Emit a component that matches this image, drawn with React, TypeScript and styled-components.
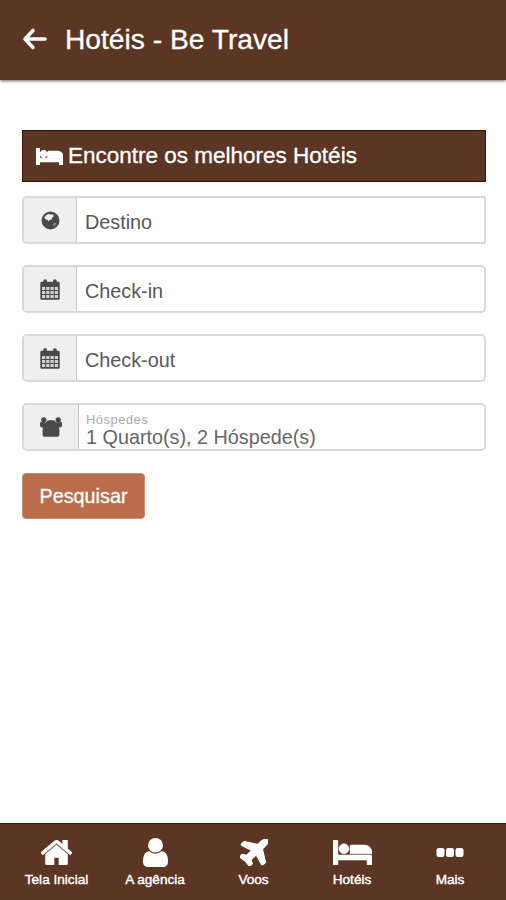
import React from 'react';
import styled, { createGlobalStyle } from 'styled-components';

const BROWN = '#5c3625';

const GlobalStyle = createGlobalStyle`
  * { box-sizing: border-box; }
  body { margin: 0; background: #fefefe; font-family: "Liberation Sans", Arial, sans-serif; }
`;

const Screen = styled.div`
  display: flex;
  flex-direction: column;
  height: 900px;
  overflow: hidden;
`;

const Header = styled.header`
  display: flex;
  align-items: center;
  gap: 17px;
  height: 80px;
  padding: 0 22px;
  background: ${BROWN};
  color: #fff;
  box-shadow: 0 1px 3px rgba(0, 0, 0, 0.6);
`;

const BackButton = styled.button`
  display: flex;
  padding: 0 0 3px;
  border: 0;
  background: none;
  color: inherit;
`;

const Title = styled.h1`
  margin: 0;
  font-size: 28.2px;
  font-weight: 400;
  line-height: 78px;
  padding-bottom: 2px;
  -webkit-text-stroke: 0.3px #fff;
`;

const Content = styled.main`
  flex: 1;
  padding: 50px 20px 0 22px;
`;

const Banner = styled.h2`
  display: flex;
  align-items: center;
  gap: 5px;
  height: 52px;
  margin: 0 0 14px;
  padding: 0 13px;
  border: 1px solid #421006;
  background: ${BROWN};
  color: #fff;
  font-size: 22.5px;
  font-weight: 400;
  white-space: nowrap;
  -webkit-text-stroke: 0.3px #fff;
`;

const Field = styled.label<{ $square?: boolean }>`
  display: flex;
  height: 48px;
  margin-bottom: 21px;
  border: 2px solid #d9d9d9;
  border-radius: ${({ $square }) => ($square ? '5px 0 0 5px' : '5px')};
  background: #fff;
  overflow: hidden;
`;

const Addon = styled.span<{ $wide?: boolean }>`
  display: flex;
  align-items: center;
  justify-content: center;
  width: ${({ $wide }) => ($wide ? 55 : 53)}px;
  border-right: 1px solid #c6c6c6;
  background: #efefef;
  color: #4a4a4a;
`;

const Value = styled.span`
  padding: 2px 0 0 8px;
  color: #585858;
  font-size: 19.8px;
  line-height: 44px;
  white-space: nowrap;
`;

const GuestValue = styled.span`
  display: flex;
  flex-direction: column;
  padding: 7px 0 0 7px;
  color: #666;
  white-space: nowrap;
`;

const Caption = styled.small`
  height: 14px;
  color: #aaa;
  font-size: 13px;
  letter-spacing: 0.45px;
  line-height: 15px;
`;

const Guests = styled.span`
  font-size: 19.8px;
  line-height: 22px;
`;

const SearchButton = styled.button`
  display: block;
  width: 123px;
  height: 46px;
  margin-top: 22px;
  padding: 0;
  border: 1px solid #c98b72;
  border-radius: 4px;
  background: #bb6c4a;
  color: #fff;
  font: 19.8px "Liberation Sans", Arial, sans-serif;
  -webkit-text-stroke: 0.3px #fff;
`;

const NavBar = styled.nav`
  display: grid;
  grid-template-columns: 113px 84px 113px 84px 112px;
  height: 77px;
  border-top: 1px solid #421006;
  background: ${BROWN};
  color: #fff;
`;

const NavItem = styled.a`
  display: flex;
  flex-direction: column;
  align-items: center;
  padding-top: 11px;
  font-size: 13.6px;
  line-height: 20px;
  white-space: nowrap;
  -webkit-text-stroke: 0.4px #fff;
`;

const NavIcon = styled.span`
  display: flex;
  align-items: center;
  justify-content: center;
  height: 35px;
`;

const Icon = styled.svg`
  display: block;
  flex: none;
  fill: currentColor;
`;

const HOME =
  'M1472 992v480q0 26-19 45t-45 19h-384v-384h-256v384h-384q-26 0-45-19t-19-45v-480q0-1 .5-3t.5-3l575-474 575 474q1 2 1 6zm223-69l-62 74q-8 9-21 11h-3q-13 0-21-7l-692-577-692 577q-12 8-24 7-13-2-21-11l-62-74q-8-10-7-23.5t11-21.5l719-599q32-26 76-26t76 26l244 204v-195q0-14 9-23t23-9h192q14 0 23 9t9 23v408l219 182q10 8 11 21.5t-7 23.5z';
const USER =
  'M1536 1399q0 109-62.5 187t-150.5 78h-854q-88 0-150.5-78t-62.5-187q0-85 8.5-160.5t31.5-152 58.5-131 94-89 134.5-34.5q131 128 313 128t313-128q76 0 134.5 34.5t94 89 58.5 131 31.5 152 8.5 160.5zm-256-887q0 159-112.5 271.5t-271.5 112.5-271.5-112.5-112.5-271.5 112.5-271.5 271.5-112.5 271.5 112.5 112.5 271.5z';
const PLANE =
  'M1568 160q44 52 12 148t-108 172l-161 161 160 696q5 19-12 33l-128 96q-7 6-19 6-4 0-7-1-15-3-21-16l-279-508-259 259 53 194q5 17-8 31l-96 96q-9 9-23 9h-2q-15-2-24-13l-189-252-252-189q-11-7-13-23-1-13 9-25l96-97q9-9 23-9 6 0 8 1l194 53 259-259-508-279q-14-8-17-24-2-16 9-27l128-128q14-13 30-8l665 159 160-160q76-76 172-108t148 12z';
const BED =
  'M256 1024h1728q26 0 45 19t19 45v448h-256v-256h-1536v256h-256v-1216q0-26 19-45t45-19h128q26 0 45 19t19 45v704zm576-320q0-106-75-181t-181-75-181 75-75 181 75 181 181 75 181-75 75-181zm1216 256v-64q0-159-112.5-271.5t-271.5-112.5h-704q-26 0-45 19t-19 45v384h1152z';

const BedIcon = ({ width, height, weight }: { width: number; height: number; weight: number }) => (
  <Icon width={width} height={height} viewBox="0 256 2048 1280" preserveAspectRatio="none">
    <path d={BED} stroke="currentColor" strokeWidth={weight} />
  </Icon>
);

const CalendarIcon = () => (
  <Icon width="20" height="21" viewBox="0 0 20 21">
    <path d="M1.5 2.8h17q1.2 0 1.2 1.2v15.5q0 1.2-1.2 1.2h-17Q.3 20.7.3 19.5V4q0-1.2 1.2-1.2z" />
    <rect x="3.3" y=".2" width="3.6" height="5.5" rx="1.6" />
    <rect x="13.1" y=".2" width="3.6" height="5.5" rx="1.6" />
    <g fill="#d0d0d0">
      <path d="M2 8h3.2v3H2zM6.2 8h3.3v3H6.2zM10.5 8h3.3v3h-3.3zM14.8 8H18v3h-3.2z" />
      <path d="M2 12h3.2v3H2zM6.2 12h3.3v3H6.2zM10.5 12h3.3v3h-3.3zM14.8 12H18v3h-3.2z" />
      <path d="M2 16h3.2v3H2zM6.2 16h3.3v3H6.2zM10.5 16h3.3v3h-3.3zM14.8 16H18v3h-3.2z" />
    </g>
  </Icon>
);

const GlobeIcon = () => (
  <Icon width="19" height="19" viewBox="0 0 19 19">
    <circle cx="9.5" cy="9.5" r="9" />
    <path
      fill="#efefef"
      d="M4.6 4.8 7.4 3l2 .6 2.600-.2.8 1.800-1.600 1.200-.6 2-1.800.4-1 1.400-1.400-1.400-2-.6-1.200-1.600z"
    />
    <path fill="#858585" d="M12 12.5l2-.8 1.2.8-1.2 2-1.6.8z" />
  </Icon>
);

const UsersIcon = () => (
  <Icon width="24" height="20" viewBox="0 0 24 20">
    <circle cx="4.8" cy="2.9" r="2.7" />
    <circle cx="19.2" cy="2.9" r="2.7" />
    <path d="M1 6.4Q1 5 2.3 5.100l4.600.3Q8.200 3.200 10 3.200h4q1.800 0 3.100 2.200l4.600-.3Q23 5 23 6.400v2q0 2-2.200 2h-.7l.3 2.500v4.300q0 2.600-2.600 2.600H6.200q-2.600 0-2.600-2.600v-4.300l.3-2.500H3.200Q1 10.400 1 8.400z" />
  </Icon>
);

const ArrowIcon = () => (
  <Icon width="26" height="24" viewBox="0 0 26 24">
    <path
      d="M11 3.5 3 12l8 8.5M3.5 12H23"
      fill="none"
      stroke="currentColor"
      strokeWidth="3.6"
      strokeLinecap="round"
      strokeLinejoin="round"
    />
  </Icon>
);

const navItems = [
  {
    label: 'Tela Inicial',
    icon: (
      <Icon width="31" height="25" viewBox="88 250 1616 1290" preserveAspectRatio="none">
        <path d={HOME} stroke="currentColor" strokeWidth="30" />
      </Icon>
    ),
  },
  {
    label: 'A agência',
    icon: (
      <Icon width="25" height="29" viewBox="256 128 1280 1536" preserveAspectRatio="none">
        <path d={USER} />
      </Icon>
    ),
  },
  {
    label: 'Voos',
    icon: (
      <Icon width="28" height="27" viewBox="190 120 1410 1420" preserveAspectRatio="none">
        <path d={PLANE} stroke="currentColor" strokeWidth="70" />
      </Icon>
    ),
  },
  { label: 'Hotéis', icon: <BedIcon width={39} height={25} weight={30} /> },
  {
    label: 'Mais',
    icon: (
      <Icon width="28" height="10" viewBox="0 0 28 10">
        <rect x="0.5" y="0" width="8" height="9" rx="2.2" />
        <rect x="10" y="0" width="8" height="9" rx="2.2" />
        <rect x="19.5" y="0" width="8" height="9" rx="2.2" />
      </Icon>
    ),
  },
];

export default function App() {
  return (
    <>
      <GlobalStyle />
      <Screen>
        <Header>
          <BackButton aria-label="Voltar">
            <ArrowIcon />
          </BackButton>
          <Title>Hotéis - Be Travel</Title>
        </Header>
        <Content>
          <Banner>
            <BedIcon width={27} height={17} weight={80} />
            <span>Encontre os melhores Hotéis</span>
          </Banner>
          <Field $square>
            <Addon><GlobeIcon /></Addon>
            <Value>Destino</Value>
          </Field>
          <Field>
            <Addon><CalendarIcon /></Addon>
            <Value>Check-in</Value>
          </Field>
          <Field>
            <Addon><CalendarIcon /></Addon>
            <Value>Check-out</Value>
          </Field>
          <Field>
            <Addon $wide><UsersIcon /></Addon>
            <GuestValue>
              <Caption>Hóspedes</Caption>
              <Guests>1 Quarto(s), 2 Hóspede(s)</Guests>
            </GuestValue>
          </Field>
          <SearchButton>Pesquisar</SearchButton>
        </Content>
        <NavBar>
          {navItems.map(({ label, icon }) => (
            <NavItem key={label}>
              <NavIcon>{icon}</NavIcon>
              {label}
            </NavItem>
          ))}
        </NavBar>
      </Screen>
    </>
  );
}
